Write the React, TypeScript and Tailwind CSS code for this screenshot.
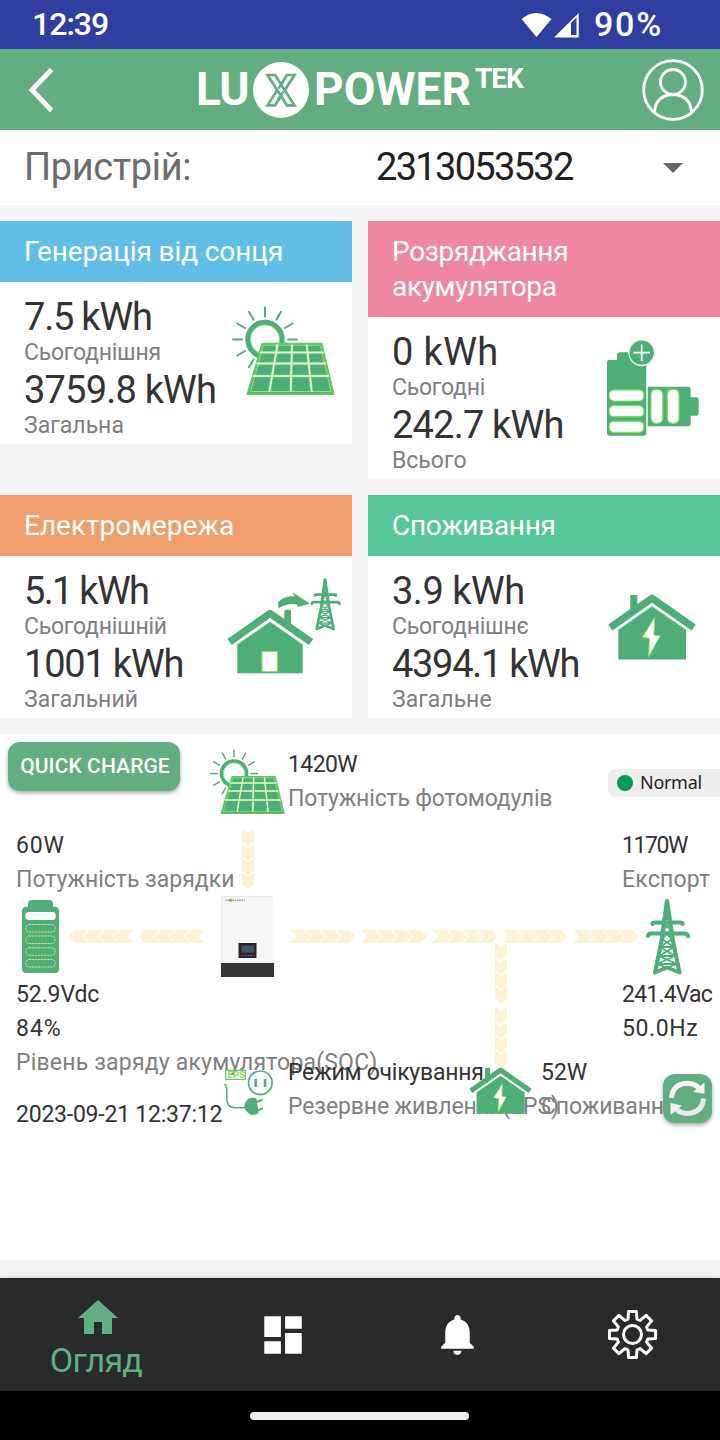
import React from 'react';
import { MdDashboard, MdHome, MdNotifications } from 'react-icons/md';

const GREEN = '#4fae78';

const SolarIcon = ({ className }: { className: string }) => (
  <svg viewBox="0 0 103 89" className={className} fill="none">
    <g stroke={GREEN} strokeWidth="2" strokeLinecap="round">
      {[120, 150, 180, 210, 240, 270, 300, 330, 0].map((deg) => (
        <path key={deg} d="M56 33.5H65" transform={`rotate(${deg} 33 33.5)`} />
      ))}
    </g>
    <circle cx="33" cy="33.5" r="17.2" fill="#fff" stroke={GREEN} strokeWidth="5" />
    <circle cx="33" cy="33.5" r="14.6" stroke="#86e36b" strokeWidth="1" />
    <path d="M30.3 37.8H89.5L101.5 88H15.5Z" fill={GREEN} stroke="#62c46f" strokeWidth="2" strokeLinejoin="round" />
    <path d="M31.5 39.3H88.300L99 85.500H18.500Z" stroke="#8ee56b" strokeWidth="1" />
    <g stroke="#83e35f" strokeWidth="2.600">
      <path d="M28 46.5H91.5M24.5 57.5H94M20.5 70H97M45.5 38.5 37.3 86M60 38.5 58.7 86M74.7 38.5 79.7 86" />
    </g>
    <g stroke="#f1fdea" strokeWidth="1.5">
      <path d="M28 46.5H91.5M24.5 57.5H94M20.5 70H97M45.5 38.5 37.3 86M60 38.5 58.7 86M74.7 38.5 79.7 86" />
    </g>
  </svg>
);

const BatteriesIcon = () => (
  <svg viewBox="0 0 94 97" className="h-[97px] w-[94px]" fill={GREEN}>
    <path d="M3 20H11V15Q11 12.3 14 12.3H31V20H38Q40.3 20 40.3 23V93Q40.3 95.7 37.5 95.7H4Q1 95.7 1 93V23Q1 20 3 20Z" />
    <path d="M41.7 46.7H82Q84.7 46.7 84.7 50V57.3H90Q92.7 57.3 92.7 60V73Q92.7 75.7 90 75.7H84.7V83Q84.7 86.3 82 86.3H41.7Z" />
    <g fill="#fff" stroke="#7ee35f" strokeWidth="1.2">
      <rect x="3.3" y="50" width="34.4" height="11" rx="4.5" />
      <rect x="3.3" y="65.7" width="34.4" height="11" rx="4.5" />
      <rect x="3.3" y="81.3" width="34.4" height="11" rx="4.5" />
      <rect x="45" y="49.3" width="11.7" height="34" rx="5" />
      <rect x="61.3" y="49.3" width="11.7" height="34" rx="5" />
    </g>
    <circle cx="35.7" cy="12.7" r="12.8" stroke="#e4f9db" strokeWidth="1.4" />
    <path d="M27.5 12.7H44M35.7 4.5V21" stroke="#fff" strokeWidth="1.8" />
  </svg>
);

const PylonShape = () => (
  <g stroke={GREEN} fill="none" strokeLinejoin="round">
    <path d="M20.8 2 15.5 42 9 73.500 21 68.500 33.500 73.500 27 42 21.200 2Z" strokeWidth="4" />
    <path d="M6.500 25Q6 23.500 9 23.500H34Q37 23.500 36.500 25M2 37Q2 34.500 5 34.500H38Q41.500 34.500 42 37" strokeWidth="4" strokeLinecap="round" />
    <path d="M17.500 24 25 31 16 40 28 48 13 57 31 65 9 73M24.500 24 17 31 26 40 14 48 29 57 11 65 33 73M19 15 23 22M23 15 19 22M14 48H28M12 57H30M11 65H32" strokeWidth="1.800" />
  </g>
);

const PylonIcon = () => (
  <svg viewBox="0 0 44 76" className="h-[76px] w-[44px]">
    <PylonShape />
  </svg>
);

const GridHouseIcon = () => (
  <svg viewBox="0 0 114 97" className="h-[97px] w-[114px]" fill={GREEN}>
    <path d="M57.300 33Q57.300 31.700 59 31.700H62.500Q64 31.700 64 33V52L57.300 47Z" />
    <path d="M2.500 64 43 35.500 84 64" fill="none" stroke={GREEN} strokeWidth="7.300" strokeLinejoin="round" />
    <path d="M43 43.800 75.700 66.500V95.300H10.300V66.500Z" />
    <rect x="35" y="73.500" width="15.400" height="20" fill="#fff" stroke="#86e36b" strokeWidth="1" />
    <path d="M51 24Q58 17.500 67.500 18.500L65.800 14.500 83 25.800 70.500 29 70 26.500Q60 24.500 51.500 30.500Z" />
    <g transform="translate(83.500 .3) scale(.69)">
      <PylonShape />
    </g>
  </svg>
);

const BoltHouseIcon = ({ className }: { className: string }) => (
  <svg viewBox="0 0 88 66" className={className} fill={GREEN}>
    <path d="M22.300 1H29.300V14L22.300 19Z" />
    <path d="M2.300 33.500 44 4.300 85.700 33.500" fill="none" stroke={GREEN} strokeWidth="7.300" strokeLinejoin="round" />
    <path d="M44 12.300 78 35.800V65.500H10.300V35.800Z" />
    <path d="M46.700 23.300 34.300 43.300 41.300 44.300 40.700 62.700 52.300 42 46 41Z" fill="#fff" stroke="#86e34f" strokeWidth="1" />
  </svg>
);

const BatteryIcon = () => (
  <svg viewBox="0 0 37 73" className="h-[73px] w-[37px]" fill={GREEN}>
    <path d="M10 0H27Q31 0 31 4V6.700H32Q37 6.700 37 11V69Q37 73 33 73H4Q0 73 0 69V11Q0 6.700 5 6.700H6V4Q6 0 10 0Z" />
    <rect x="3.300" y="12" width="30.400" height="8" rx="3.500" fill="#fff" />
    <g fill="none" stroke="#e3e493" strokeWidth="1" strokeDasharray="2 1">
      {[24.5, 36, 47.8, 59.5].map((y) => (
        <rect key={y} x="3.800" y={y} width="29.400" height="7.500" rx="3.500" />
      ))}
    </g>
  </svg>
);

const EpsIcon = () => (
  <svg viewBox="0 0 50 48" className="h-[48px] w-[50px]" fill="none" stroke={GREEN}>
    <rect x="1.700" y="2.300" width="19.600" height="9" strokeWidth="1" />
    <text x="3.600" y="10.200" fontSize="9.500" fontWeight="700" fontFamily="Roboto, sans-serif" fill="#8fe03c" stroke="none">EPS</text>
    <circle cx="36.300" cy="14.800" r="11.800" strokeWidth="1.700" />
    <path d="M31.700 11V19M41 11V19" strokeWidth="2.600" />
    <path d="M.3 16Q3 17 2.800 24V30Q2.500 39.700 11 39.700H22" strokeWidth="1.500" />
    <path d="M32 31 34 45Q28 48.500 23.500 44 18.500 38 23 32.500 27 28.500 32 31Z" fill={GREEN} />
    <path d="M31 34.500 38.500 31.500M33 42.500 39 40.500" strokeWidth="2" />
  </svg>
);

const InverterIcon = () => (
  <svg viewBox="0 0 53 81" className="h-[81px] w-[53px]">
    <rect width="53" height="81" fill="#f5f6f6" />
    <path d="M.3 0V81M0 .3H53" stroke="#d9dada" strokeWidth=".6" />
    <path d="M4.500 4.300H24" stroke="#9d9d9d" strokeWidth="1.600" strokeDasharray="1.500 .8" />
    <circle cx="9.700" cy="4.300" r="1.700" fill="#8cc63f" />
    <rect y="67" width="53" height="14" fill="#363636" />
    <rect x="17.500" y="47" width="18" height="15" fill="#2c2424" />
    <rect x="20.300" y="49.500" width="12.600" height="7" fill="#3f5666" />
    <path d="M20.500 59.500H33" stroke="#857c7c" strokeWidth="1" strokeDasharray="1.500 1.500" />
  </svg>
);

const HArrows = ({ flip = false }: { flip?: boolean }) => (
  <svg viewBox="0 0 66 13" className={`h-[13px] w-[66px] ${flip ? '-scale-x-100' : ''}`} fill="#fff2d4">
    {[0, 15.2, 30.4, 45.6].map((x) => (
      <path key={x} d="M0 0H13.700L20.500 6.500 13.700 13H0L6.700 6.500Z" transform={`translate(${x} 0)`} />
    ))}
  </svg>
);

const VArrows = () => (
  <svg viewBox="0 0 12 60" className="h-[60px] w-[12px]" fill="#fff2d4">
    {[0, 14.4, 28.8, 43.2].map((y) => (
      <path key={y} d="M0 0 6 4.500 12 0V12.800L6 17 0 12.800Z" transform={`translate(0 ${y})`} />
    ))}
  </svg>
);

const GearIcon = () => {
  const points: string[] = [];
  for (let i = 0; i < 8; i++) {
    [[-16.5, 16], [-9.5, 23.4], [9.5, 23.4], [16.5, 16]].forEach(([deg, r]) => {
      const a = ((i * 45 + deg) * Math.PI) / 180;
      points.push(`${(24.5 + r * Math.sin(a)).toFixed(1)},${(24.5 - r * Math.cos(a)).toFixed(1)}`);
    });
  }
  return (
    <svg viewBox="0 0 50 50" className="size-[50px]" fill="none" stroke="#fff" strokeWidth="3" strokeLinejoin="round">
      <polygon points={points.join(' ')} />
      <circle cx="24.5" cy="24.5" r="9" />
    </svg>
  );
};

interface CardProps {
  title: string;
  titleStyle: string;
  today: string;
  todayStyle: string;
  todayLabel: string;
  total: string;
  totalStyle: string;
  totalLabel: string;
  iconBox: string;
  icon: React.ReactNode;
}

const StatCard: React.FC<CardProps> = ({ title, titleStyle, today, todayStyle, todayLabel, total, totalStyle, totalLabel, iconBox, icon }) => (
  <div className="bg-white">
    <div className={`px-6 py-[13px] text-[28px] leading-[35px] whitespace-pre-line text-white ${titleStyle}`}>{title}</div>
    <div className="flex justify-between pl-6">
      <div className="h-[162px] pt-[14px] whitespace-nowrap">
        <div className={`text-[38px] leading-[43px] text-[#333] ${todayStyle}`}>{today}</div>
        <div className="mb-[3px] text-[23px] leading-[27px] tracking-[-0.25px] text-[#7f7f7f]">{todayLabel}</div>
        <div className={`text-[38px] leading-[43px] text-[#333] ${totalStyle}`}>{total}</div>
        <div className="text-[23px] leading-[27px] text-[#7f7f7f]">{totalLabel}</div>
      </div>
      <div className={iconBox}>{icon}</div>
    </div>
  </div>
);

const diagramTexts = [
  { text: '1420W', style: 'left-[288px] top-[750px] tracking-[-0.6px] text-[#333]' },
  { text: 'Потужність фотомодулів', style: 'left-[288px] top-[784px] tracking-[-0.17px] text-[#7f7f7f]' },
  { text: '60W', style: 'left-[16px] top-[831px] tracking-[0.8px] text-[#333]' },
  { text: 'Потужність зарядки', style: 'left-[16px] top-[865px] text-[#7f7f7f]' },
  { text: '1170W', style: 'left-[622px] top-[831px] tracking-[-1.4px] text-[#333]' },
  { text: 'Експорт', style: 'left-[622px] top-[865px] tracking-[0.2px] text-[#7f7f7f]' },
  { text: '52.9Vdc', style: 'left-[16px] top-[980px] tracking-[-0.1px] text-[#333]' },
  { text: '84%', style: 'left-[16px] top-[1014px] tracking-[1px] text-[#333]' },
  { text: 'Рівень заряду акумулятора(SOC)', style: 'left-[16px] top-[1048px] tracking-[0.19px] text-[#7f7f7f]' },
  { text: '241.4Vac', style: 'left-[622px] top-[980px] tracking-[-0.8px] text-[#333]' },
  { text: '50.0Hz', style: 'left-[622px] top-[1014px] tracking-[0.6px] text-[#333]' },
  { text: 'Режим очікування', style: 'left-[288px] top-[1058px] tracking-[-0.25px] text-[#333]' },
  { text: 'Резервне живлення(EPS)', style: 'left-[288px] top-[1092px] tracking-[-0.12px] text-[#7f7f7f]' },
  { text: '52W', style: 'left-[541px] top-[1058px] text-[#333]' },
  { text: 'Споживання', style: 'left-[541px] top-[1092px] tracking-[-0.15px] text-[#7f7f7f]' },
  { text: '2023-09-21 12:37:12', style: 'left-[16px] top-[1100px] tracking-[-0.23px] text-[#333]' },
];

const App: React.FC = () => {
  return (
    <div className="relative flex h-[1440px] w-[720px] flex-col overflow-hidden bg-[#f4f4f4] font-['Roboto','Noto_Sans',sans-serif]">
      {/* Status bar */}
      <div className="flex h-[49px] items-center bg-[#303e9f] pl-[32px] text-[32px] font-medium text-white">
        <span className="-mt-[2px] flex-1 tracking-[-1px]">12:39</span>
        <svg viewBox="0 0 58 26" className="mr-[15px] h-[26px] w-[58px]" fill="#fff">
          <path d="M.5 7Q15 -5 30.500 7L15.500 25Z" />
          <path d="M33 25.500 57.700 1V25.500ZM50 11V23H55.500V5.500Z" fillRule="evenodd" />
        </svg>
        <span className="-mt-[1px] w-[126px] text-[34px] tracking-[1.8px]">90%</span>
      </div>

      {/* Header */}
      <div className="flex h-[81px] items-center justify-between bg-[#62ad82] pr-4 pl-[28px]">
        <svg viewBox="0 0 26 46" className="h-[46px] w-[26px]" fill="none" stroke="#fff" strokeWidth="4.800">
          <path d="M23.500 2.500 4 23 23.500 43.500" />
        </svg>
        <div className="ml-[142px] flex flex-1 items-center text-[46px] font-bold text-white">
          <span className="w-[57px] tracking-[-1px]">LU</span>
          <svg viewBox="0 0 56 56" className="mr-[5px] size-[56px]">
            <circle cx="28" cy="28" r="28" fill="#fff" />
            <g fill="#fff" stroke="#62ad82" strokeWidth="2.700" strokeLinejoin="miter">
              <path d="M41.500 13H34L14.500 43.300H22Z" />
              <path d="M14.500 13H22L41.500 43.300H34Z" />
            </g>
            <path d="M25.500 26.500 31.500 17.500M24.500 38.500 30.500 29.500" stroke="#62ad82" strokeWidth="2.400" />
          </svg>
          <span className="w-[161px]">POWER</span>
          <span className="-mt-[21px] text-[28px] tracking-[-1px]">TEK</span>
        </div>
        <svg viewBox="0 0 62 62" className="size-[62px]" fill="none" stroke="#fff" strokeWidth="2.800">
          <circle cx="31" cy="31" r="29.300" />
          <circle cx="31" cy="23" r="12.500" />
          <path d="M12.500 53Q14 36 31 35.500 48 36 49.500 53" />
        </svg>
      </div>

      {/* Device selector */}
      <div className="flex h-[75px] items-center bg-white pr-[37px] pl-6 text-[38px]">
        <span className="w-[352px] tracking-[-0.35px] text-[#6c6c6c]">Пристрій:</span>
        <span className="flex-1 tracking-[-1.7px] text-[#212121]">2313053532</span>
        <svg viewBox="0 0 20 10" className="h-[10px] w-[20px]" fill="#666">
          <path d="M0 0H20L10 10Z" />
        </svg>
      </div>

      {/* Summary cards */}
      <div className="mt-4 grid grid-cols-2 items-start gap-4">
        <StatCard
          title="Генерація від сонця"
          titleStyle="bg-[#62bde6] tracking-[-0.1px]"
          today="7.5 kWh"
          todayStyle="tracking-[-1.2px]"
          todayLabel="Сьогоднішня"
          total="3759.8 kWh"
          totalStyle="tracking-[-0.8px]"
          totalLabel="Загальна"
          iconBox="pt-[24px] pr-[17px]"
          icon={<SolarIcon className="h-[89px] w-[103px]" />}
        />
        <StatCard
          title={'Розряджання\nакумулятора'}
          titleStyle="bg-[#f087a1] tracking-[-0.35px]"
          today="0 kWh"
          todayStyle="tracking-[0.4px]"
          todayLabel="Сьогодні"
          total="242.7 kWh"
          totalStyle="tracking-[-0.8px]"
          totalLabel="Всього"
          iconBox="pt-[23px] pr-[20px]"
          icon={<BatteriesIcon />}
        />
        <StatCard
          title="Електромережа"
          titleStyle="bg-[#f09d6c]"
          today="5.1 kWh"
          todayStyle="tracking-[-1.7px]"
          todayLabel="Сьогоднішній"
          total="1001 kWh"
          totalStyle="tracking-[-1.2px]"
          totalLabel="Загальний"
          iconBox="pt-[22px] pr-[11px]"
          icon={<GridHouseIcon />}
        />
        <StatCard
          title="Споживання"
          titleStyle="bg-[#57c699] tracking-[-0.3px]"
          today="3.9 kWh"
          todayStyle="tracking-[-0.5px]"
          todayLabel="Сьогоднішнє"
          total="4394.1 kWh"
          totalStyle="tracking-[-1.3px]"
          totalLabel="Загальне"
          iconBox="pt-[38px] pr-[24px]"
          icon={<BoltHouseIcon className="h-[66px] w-[88px]" />}
        />
      </div>

      {/* Energy flow diagram */}
      <div className="mt-4 h-[526px] bg-white text-[23px] leading-[30px] whitespace-nowrap">
        {diagramTexts.map((item) => (
          <span key={item.text} className={`absolute ${item.style}`}>{item.text}</span>
        ))}

        <div className="absolute top-[749px] left-[210px]"><SolarIcon className="h-[65px] w-[75px]" /></div>
        <div className="absolute top-[900px] left-[22px]"><BatteryIcon /></div>
        <div className="absolute top-[896px] left-[221px]"><InverterIcon /></div>
        <div className="absolute top-[899px] left-[646px]"><PylonIcon /></div>
        <div className="absolute top-[1068px] left-[224px]"><EpsIcon /></div>

        <div className="absolute top-[829px] left-[242px]"><VArrows /></div>
        <div className="absolute top-[930px] left-[68px] flex gap-[5px]">
          <HArrows flip />
          <HArrows flip />
        </div>
        <div className="absolute top-[930px] left-[290px] flex gap-[4.800px]">
          <HArrows />
          <HArrows />
          <HArrows />
          <HArrows />
          <HArrows />
        </div>
        <div className="absolute top-[943px] left-[495px] flex flex-col gap-[4px]">
          <VArrows />
          <VArrows />
        </div>
        <div className="absolute top-[1067px] left-[469px]"><BoltHouseIcon className="h-[47px] w-[63px]" /></div>

        <button className="absolute top-[742px] left-[8px] h-[49px] w-[172px] rounded-[12px] bg-[#62ad82] pb-[2px] pl-[2px] text-[21px] font-medium tracking-[0.1px] text-white shadow-[0_2px_4px_rgba(0,0,0,0.35)]">
          QUICK CHARGE
        </button>
        <div className="absolute top-[769px] left-[608px] flex h-[28px] w-[112px] items-center gap-[7px] rounded-l-[8px] bg-[#eeeeee] pl-[9px] font-['Noto_Sans',sans-serif] text-[18px] text-[#2b2324]">
          <span className="size-[16px] rounded-full bg-[#069b4b]" />
          <span className="-mt-[2px] tracking-[-0.3px]">Normal</span>
        </div>
        <button className="absolute top-[1074px] left-[663px] size-[49px] rounded-[12px] bg-[#62ad82] shadow-[0_2px_4px_rgba(0,0,0,0.35)]">
          <svg viewBox="0 0 49 49" className="size-[49px]" fill="#f3f3f3">
            <path d="M8.500 24Q9.500 10 24.500 9.300 33 9.500 37.500 16" fill="none" stroke="#f3f3f3" strokeWidth="5" />
            <path d="M41.500 8.500V19.800L30 18Z" />
            <path d="M40.500 24.500Q39.500 38.500 24.500 39.500 16 39.500 11.500 33" fill="none" stroke="#e9e9e9" strokeWidth="5" />
            <path d="M7.500 41V29L19 31.500Z" />
          </svg>
        </button>
      </div>

      {/* Bottom navigation */}
      <div className="mt-[18px] flex h-[113px] bg-[#292a2c] text-white shadow-[0_-1px_4px_rgba(0,0,0,0.12)]">
        <div className="flex w-[195px] flex-col items-center pt-[16px] text-[#62ad82]">
          <MdHome size={48} />
          <span className="-mt-[3px] mr-[3px] text-[34px] leading-[42px] tracking-[-0.7px]">Огляд</span>
        </div>
        <div className="flex flex-1 items-center justify-center">
          <MdDashboard size={50} />
        </div>
        <div className="flex flex-1 items-center justify-center">
          <MdNotifications size={49} />
        </div>
        <div className="flex flex-1 items-center justify-center">
          <GearIcon />
        </div>
      </div>

      <div className="flex h-[49px] items-center bg-black pl-[250px]">
        <div className="h-[8px] w-[219px] rounded-full bg-[#ebebeb]" />
      </div>
    </div>
  );
};

export default App;
